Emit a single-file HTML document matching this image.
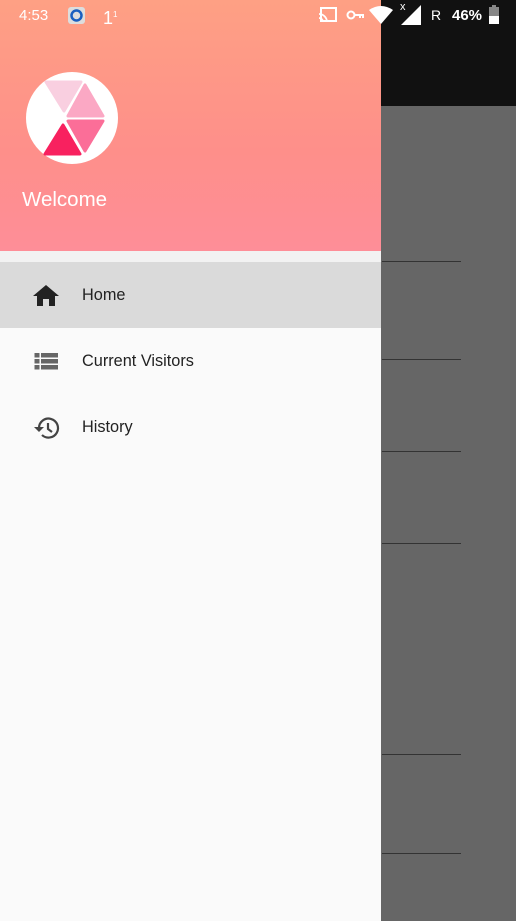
<!DOCTYPE html>
<html><head><meta charset="utf-8">
<style>
*{margin:0;padding:0;box-sizing:border-box}
body{width:516px;height:921px;overflow:hidden;position:relative;background:#666;font-family:"Liberation Sans",Roboto,sans-serif}
.right-top{position:absolute;left:381px;top:0;width:135px;height:106px;background:#111}
.rule{position:absolute;left:382px;width:79px;height:1px;background:#333}
.drawer{position:absolute;left:0;top:0;width:381px;height:921px;background:#fafafa}
.header{position:absolute;left:0;top:0;width:381px;height:251px;background:linear-gradient(180deg,#fea084 0%,#fe8f8a 60%,#fe8e98 100%)}
.strip{position:absolute;left:0;top:251px;width:381px;height:11px;background:#f2f2f2}
.welcome{position:absolute;left:22px;top:188px;color:#fff;font-size:20.5px}
.item{position:absolute;left:0;width:381px;height:66px}
.item span{position:absolute;left:82px;top:24px;font-size:16.3px;color:#222}
.item svg{position:absolute;left:32px;top:21px}
.sb{position:absolute;top:0;height:30px;color:#fff;font-size:15px;line-height:30px}
</style></head><body>
<div class="right-top"></div>
<div class="rule" style="top:261px"></div>
<div class="rule" style="top:359px"></div>
<div class="rule" style="top:451px"></div>
<div class="rule" style="top:543px"></div>
<div class="rule" style="top:754px"></div>
<div class="rule" style="top:853px"></div>
<div class="drawer">
 <div class="header">
  <svg style="position:absolute;left:0;top:0" width="130" height="170">
   <circle cx="72" cy="118" r="46" fill="#fff"/>
   <g stroke-linejoin="round" stroke-width="3">
   <polygon points="64,111 46,82 81,82" fill="#f9cfe0" stroke="#f9cfe0"/>
   <polygon points="68,116 85,85 103,116" fill="#fba8c4" stroke="#fba8c4"/>
   <polygon points="68,121 103,121 85,151" fill="#fb6e98" stroke="#fb6e98"/>
   <polygon points="63,125 80,154 45,154" fill="#f8215f" stroke="#f8215f"/>
   </g>
  </svg>
  <div class="welcome">Welcome</div>
 </div>
 <div class="strip"></div>
 <div class="item" style="top:262px;background:#dadada">
  <svg width="28" height="24" viewBox="0 0 28 24"><path d="M14 2 L1 13 H5 V23 H11 V16 H17 V23 H23 V13 H27 Z" fill="#222"/></svg>
  <span>Home</span>
 </div>
 <div class="item" style="top:328px">
  <svg width="28" height="24" viewBox="0 0 28 24"><g fill="#666"><rect x="2.5" y="4" width="5" height="4.5"/><rect x="9" y="4" width="17" height="4.5"/><rect x="2.5" y="10" width="5" height="4.5"/><rect x="9" y="10" width="17" height="4.5"/><rect x="2.5" y="16" width="5" height="4.5"/><rect x="9" y="16" width="17" height="4.5"/></g></svg>
  <span>Current Visitors</span>
 </div>
 <div class="item" style="top:394px">
  <svg width="30" height="28" viewBox="0 0 30 28"><path d="M7 13 A9.5 9.5 0 1 1 10 20" fill="none" stroke="#444" stroke-width="2.2"/><path d="M2 12 L7 17 L12 12 Z" fill="#444"/><path d="M16 8 V14 L20 17" fill="none" stroke="#444" stroke-width="2.2"/></svg>
  <span>History</span>
 </div>
</div>
<div class="sb" style="left:19px;top:1px">4:53</div>
<svg style="position:absolute;left:68px;top:7px" width="17" height="17"><rect x="0" y="0" width="17" height="17" rx="3" fill="#ddd"/><circle cx="8.5" cy="8.5" r="5" fill="none" stroke="#1a5fc0" stroke-width="2.5"/></svg>
<div class="sb" style="left:103px;font-size:18px">1<sup style="font-size:8px">1</sup></div>
<svg style="position:absolute;left:318px;top:6px" width="20" height="18"><rect x="3" y="2" width="15" height="13" fill="none" stroke="#fff" stroke-width="2"/><path d="M1 8 A8 8 0 0 1 9 16 M1 12 A4 4 0 0 1 5 16" fill="none" stroke="#fff" stroke-width="1.8"/></svg>
<svg style="position:absolute;left:346px;top:9px" width="18" height="12"><circle cx="5" cy="6" r="3.5" fill="none" stroke="#fff" stroke-width="2"/><path d="M8 6 H17 V9 M14 6 V9" fill="none" stroke="#fff" stroke-width="2"/></svg>
<svg style="position:absolute;left:369px;top:5px" width="24" height="19"><path d="M0 5 Q12 -3 24 5 L12 19 Z" fill="#fff"/></svg>
<div class="sb" style="left:400px;top:-8px;font-size:11px">x</div>
<svg style="position:absolute;left:401px;top:5px" width="20" height="20"><path d="M20 0 V20 H0 Z" fill="#fff"/></svg>
<div class="sb" style="left:431px;font-size:14px">R</div>
<div class="sb" style="left:452px;top:1px;font-weight:bold;font-size:15px">46%</div>
<svg style="position:absolute;left:489px;top:5px" width="10" height="19"><rect x="3" y="0" width="4" height="2" fill="#888"/><rect x="0" y="2" width="10" height="17" fill="#888"/><rect x="0" y="11" width="10" height="8" fill="#fff"/></svg>
</body></html>
